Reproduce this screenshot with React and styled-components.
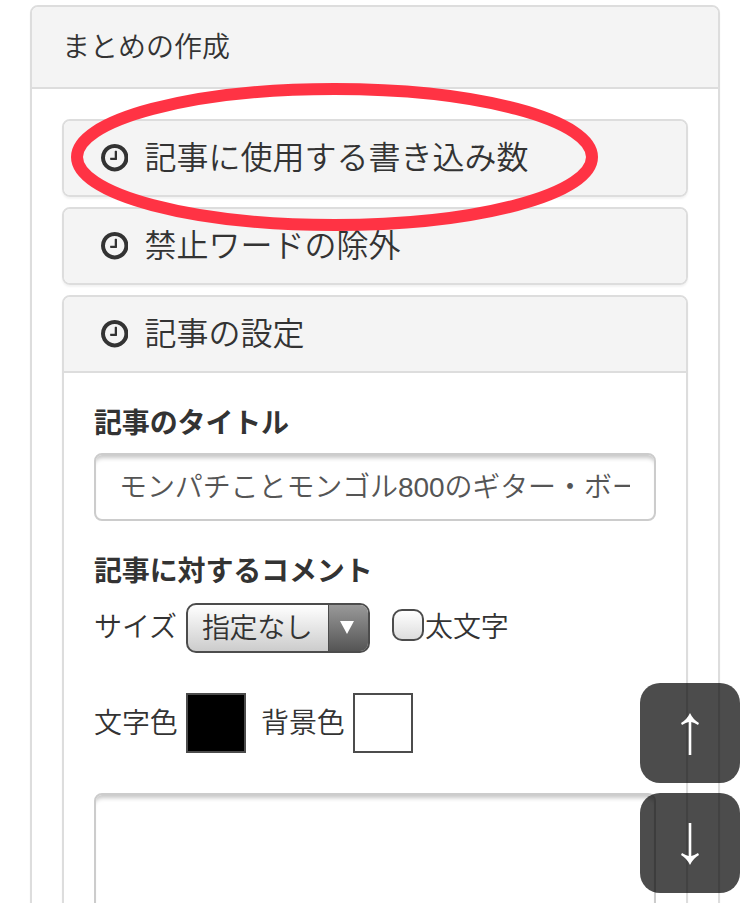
import styled, { createGlobalStyle } from "styled-components";

const GlobalStyle = createGlobalStyle`
  * {
    box-sizing: border-box;
  }

  body {
    margin: 0;
    background: #fff;
    color: #333;
    font-family: "Liberation Sans", "Noto Sans CJK JP", sans-serif;
    font-size: 28px;
    font-weight: 350;
    line-height: 40px;
  }
`;

const Page = styled.main`
  position: relative;
  height: 903px;
  padding: 5px 30px 0;
  overflow: hidden;
`;

const Panel = styled.section`
  height: 1400px;
  border: 2px solid #ddd;
  border-radius: 8px;
  box-shadow: 0 2px 2px rgba(0, 0, 0, 0.05);
  overflow: hidden;
`;

const PanelHeading = styled.header`
  height: 82px;
  padding: 21px 30px 0;
  background: #f4f4f4;
  border-bottom: 2px solid #ddd;
`;

const PanelBody = styled.div`
  display: flex;
  flex-direction: column;
  gap: 10px;
  padding: 30px;
`;

const Item = styled.article`
  border: 2px solid #ddd;
  border-radius: 8px;
  box-shadow: 0 2px 2px rgba(0, 0, 0, 0.05);
  overflow: hidden;
`;

const ItemHeading = styled.h4`
  display: flex;
  align-items: center;
  gap: 16.5px;
  height: ${(props) => (props.$open ? "76px" : "74px")};
  margin: 0;
  padding: 0 36.5px;
  background: #f4f4f4;
  border-bottom: ${(props) => (props.$open ? "2px solid #ddd" : "0")};
  font-size: 32px;
  font-weight: 350;
`;

const ItemBody = styled.div`
  height: 1000px;
  padding: 30px;
`;

const Label = styled.label`
  display: block;
  height: 40px;
  padding-top: 1px;
  font-weight: 700;
  letter-spacing: -0.15px;
`;

const TitleInput = styled.input`
  display: block;
  width: 100%;
  height: 68px;
  margin: 10px 0 30px;
  padding: 0 24px 4px 23px;
  background: #fff;
  border: 2px solid #ccc;
  border-radius: 8px;
  box-shadow: inset 0 6px 4px -3px rgba(0, 0, 0, 0.22);
  color: #555;
  font: inherit;
  letter-spacing: -0.1px;
`;

const Row = styled.div`
  display: flex;
  align-items: center;
  height: ${(props) => props.$height}px;
  margin-bottom: ${(props) => props.$gap}px;
`;

const Text = styled.span`
  width: 92px;
  padding-top: ${(props) => (props.$low ? "2px" : "0")};
  letter-spacing: -0.1px;
`;

const Select = styled.div`
  display: flex;
  width: 184px;
  height: 50px;
  margin-right: 22px;
  background: linear-gradient(#fff, #ccc);
  border: 2px solid #4c4c4c;
  border-radius: 10px;
  overflow: hidden;
`;

const SelectValue = styled.span`
  flex: 1;
  padding-left: 14px;
  line-height: 48px;
  letter-spacing: -0.4px;
`;

const SelectArrow = styled.span`
  display: flex;
  align-items: center;
  justify-content: center;
  width: 40px;
  padding: 0 3px 2px 0;
  background: linear-gradient(#999, #555);
  border-left: 1px solid #4c4c4c;
`;

const Check = styled.span`
  width: 32px;
  height: 32px;
  margin: -6px 1px 0 0;
  background: linear-gradient(#fff, #ddd);
  border: 2px solid #4c4c4c;
  border-radius: 10px;
`;

const Swatch = styled.span`
  width: 60px;
  height: 60px;
  margin-right: 15px;
  background: ${(props) => props.$color};
  border: 2px solid #4c4c4c;
`;

const Comment = styled.textarea`
  display: block;
  width: 100%;
  height: 400px;
  border: 2px solid #ccc;
  border-radius: 8px;
  box-shadow: inset 0 6px 4px -3px rgba(0, 0, 0, 0.22);
  resize: none;
`;

const Marker = styled.svg`
  position: absolute;
  top: 83px;
  left: 71px;
  pointer-events: none;
`;

const ScrollButtons = styled.nav`
  position: absolute;
  top: 683px;
  right: 10px;
  display: flex;
  flex-direction: column;
  gap: 10px;
`;

const ScrollButton = styled.button`
  display: flex;
  align-items: center;
  justify-content: center;
  width: 100px;
  height: 100px;
  padding: 0;
  background: rgba(0, 0, 0, 0.7);
  border: 0;
  border-radius: 20px;

  svg {
    transform: ${(props) => (props.$down ? "translateY(1px) rotate(180deg)" : "translateY(1px)")};
  }
`;

const ClockIcon = () => (
  <svg width="27.43" height="27.43" viewBox="0 128 1536 1536" fill="#333">
    <path d="M896 544v448q0 14-9 23t-23 9h-320q-14 0-23-9t-9-23v-64q0-14 9-23t23-9h224v-352q0-14 9-23t23-9h64q14 0 23 9t9 23zm416 352q0-148-73-273t-198-198-273-73-273 73-198 198-73 273 73 273 198 198 273 73 273-73 198-198 73-273zm224 0q0 209-103 385.5t-279.5 279.5-385.5 103-385.5-103-279.5-279.5-103-385.5 103-385.5 279.5-279.5 385.5-103 385.5 103 279.5 279.5 103 385.5z" />
  </svg>
);

const ArrowIcon = () => (
  <svg width="18" height="42" viewBox="0 0 18 42" fill="#fff">
    <path d="M9 0Q12 6.5 18 10L17 12Q13 9.5 10.3 9V42H7.7V9Q5 9.5 1 12L0 10Q6 6.5 9 0Z" />
  </svg>
);

const SectionHeading = ({ open, children }) => (
  <ItemHeading $open={open}>
    <ClockIcon />
    <span>{children}</span>
  </ItemHeading>
);

const App = () => (
  <Page>
    <GlobalStyle />
    <Panel>
      <PanelHeading>まとめの作成</PanelHeading>
      <PanelBody>
        <Item>
          <SectionHeading>記事に使用する書き込み数</SectionHeading>
        </Item>
        <Item>
          <SectionHeading>禁止ワードの除外</SectionHeading>
        </Item>
        <Item>
          <SectionHeading open>記事の設定</SectionHeading>
          <ItemBody>
            <Label htmlFor="title">記事のタイトル</Label>
            <TitleInput
              id="title"
              defaultValue="モンパチことモンゴル800のギター・ボーカル"
            />

            <Label htmlFor="comment">記事に対するコメント</Label>
            <Row $height={74} $gap={28}>
              <Text>サイズ</Text>
              <Select>
                <SelectValue>指定なし</SelectValue>
                <SelectArrow>
                  <svg width="14" height="13" viewBox="0 0 14 13" fill="#fff">
                    <path d="M0 0H14L7 13Z" />
                  </svg>
                </SelectArrow>
              </Select>
              <Check />
              <Text>太文字</Text>
            </Row>
            <Row $height={60} $gap={40}>
              <Text $low>文字色</Text>
              <Swatch $color="#000" />
              <Text $low>背景色</Text>
              <Swatch $color="#fff" />
            </Row>

            <Comment id="comment" />
          </ItemBody>
        </Item>
      </PanelBody>
    </Panel>

    <Marker width="527" height="148" viewBox="0 0 527 148" fill="none">
      <ellipse
        cx="263.5"
        cy="74"
        rx="257.5"
        ry="68"
        stroke="#ff3344"
        strokeWidth="12"
      />
    </Marker>

    <ScrollButtons>
      <ScrollButton aria-label="up">
        <ArrowIcon />
      </ScrollButton>
      <ScrollButton $down aria-label="down">
        <ArrowIcon />
      </ScrollButton>
    </ScrollButtons>
  </Page>
);

export default App;
